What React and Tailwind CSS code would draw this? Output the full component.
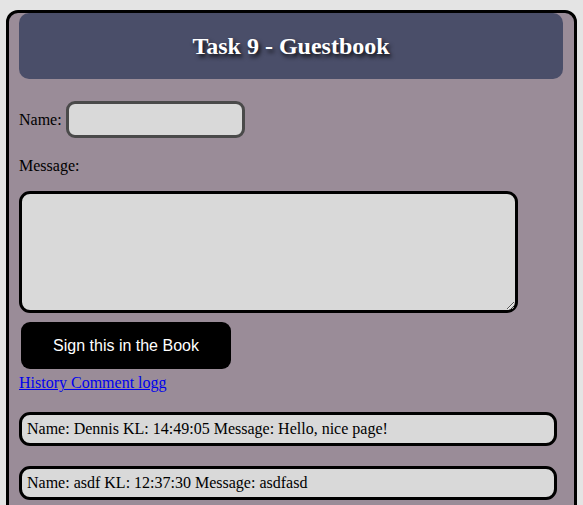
import React from "react";

const comments = [
  { name: "Dennis", time: "14:49:05", message: "Hello, nice page!" },
  { name: "asdf", time: "12:37:30", message: "asdfasd" },
];

export default function App() {
  return (
    <div className="min-h-screen bg-[#e4e4e4] pt-[10px] px-[6px] font-['Liberation_Serif',serif] text-[16px] text-black">
      <div className="min-h-[520px] rounded-[12px] border-[3px] border-black bg-[#9a8c98] pl-[10px] pr-[11px]">
        <header className="flex h-[66px] items-center justify-center rounded-[10px] bg-[#4a4e69]">
          <h1 className="text-[24px] font-bold text-white [text-shadow:2px_3px_4px_rgba(0,0,0,0.85)]">
            Task 9 - Guestbook
          </h1>
        </header>

        <form className="flex flex-col items-start">
          <label className="mt-[22px] flex items-center">
            <span>Name:</span>
            <input
              type="text"
              className="ml-[4px] h-[37px] w-[179px] rounded-[9px] border-[3px] border-[#4a4a4a] bg-[#d9d9d9] outline-none"
            />
          </label>
          <label className="mt-[18px] leading-[20px]">Message:</label>
          <textarea className="mt-[15px] h-[122px] w-[499px] rounded-[11px] border-[3px] border-black bg-[#d9d9d9] outline-none" />
          <button
            type="button"
            className="ml-[2px] mt-[9px] h-[47px] w-[210px] rounded-[9px] bg-black font-['Liberation_Sans',sans-serif] text-[16px] text-white"
          >
            Sign this in the Book
          </button>
          <a href="#" className="mt-[3px] leading-[22px] text-[#0000ee] underline">
            History Comment logg
          </a>
        </form>

        <div className="mt-[18px] flex flex-col items-start gap-[20px]">
          {comments.map((c) => (
            <div
              key={c.time}
              className="flex h-[34px] w-[538px] items-center rounded-[11px] border-[3px] border-black bg-[#d9d9d9] px-[5px]"
            >
              Name: {c.name} KL: {c.time} Message: {c.message}
            </div>
          ))}
        </div>
      </div>
    </div>
  );
}
